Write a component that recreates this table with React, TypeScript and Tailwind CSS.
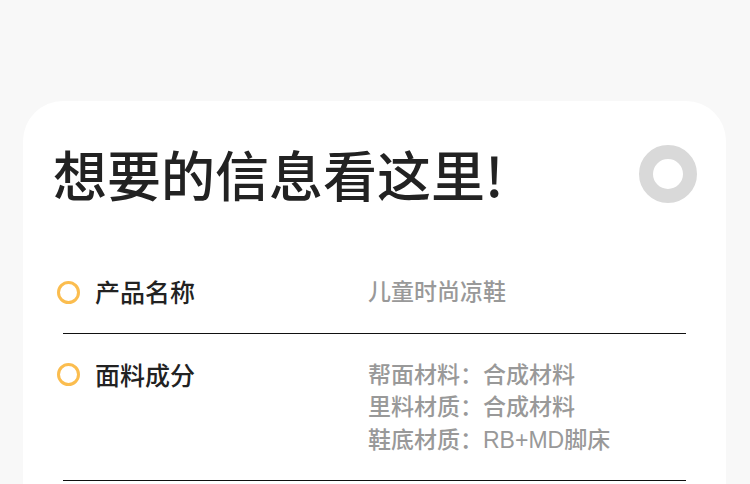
const rows = [
  { label: '产品名称', values: ['儿童时尚凉鞋'] },
  { label: '面料成分', values: ['帮面材料：合成材料', '里料材质：合成材料', '鞋底材质：RB+MD脚床'] }
]

const font = { fontFamily: '"Noto Sans CJK SC", "Noto Sans", sans-serif' }
const valueFont = { fontFamily: '"Liberation Sans", "Noto Sans CJK SC", sans-serif' }

export default function App() {
  return (
    <div className="w-[750px] h-[484px] overflow-hidden bg-[#f8f8f8] pt-[101px] pl-[23px] pr-[24px]" style={font}>
      <div className="bg-white rounded-t-[40px] h-[420px]">
        <div className="flex items-center justify-between pl-[30px] pr-[29px] pt-[35px]">
          <h1 className="text-[54px] leading-[76px] font-medium text-[#222]">想要的信息看这里!</h1>
          <div className="w-[58px] h-[58px] rounded-full border-[14px] border-[#d9d9d9]"></div>
        </div>
        <div className="mt-[64px] px-[40px]">
          {rows.map((row) => (
            <div key={row.label} className="border-b border-[#111] pb-[24px] mb-[25px]">
              <div className="flex">
                <div className="w-[311px] flex items-center h-[32px] -ml-[6px]">
                  <div className="w-[23px] h-[23px] rounded-full border-[3.5px] border-[#fbbd4f]"></div>
                  <span className="ml-[15px] text-[25px] font-medium text-[#222]">{row.label}</span>
                </div>
                <div className="flex flex-col" style={valueFont}>
                  {row.values.map((v) => (
                    <span key={v} className="text-[23px] leading-[32.5px] font-medium text-[#999]">{v}</span>
                  ))}
                </div>
              </div>
            </div>
          ))}
        </div>
      </div>
    </div>
  )
}
